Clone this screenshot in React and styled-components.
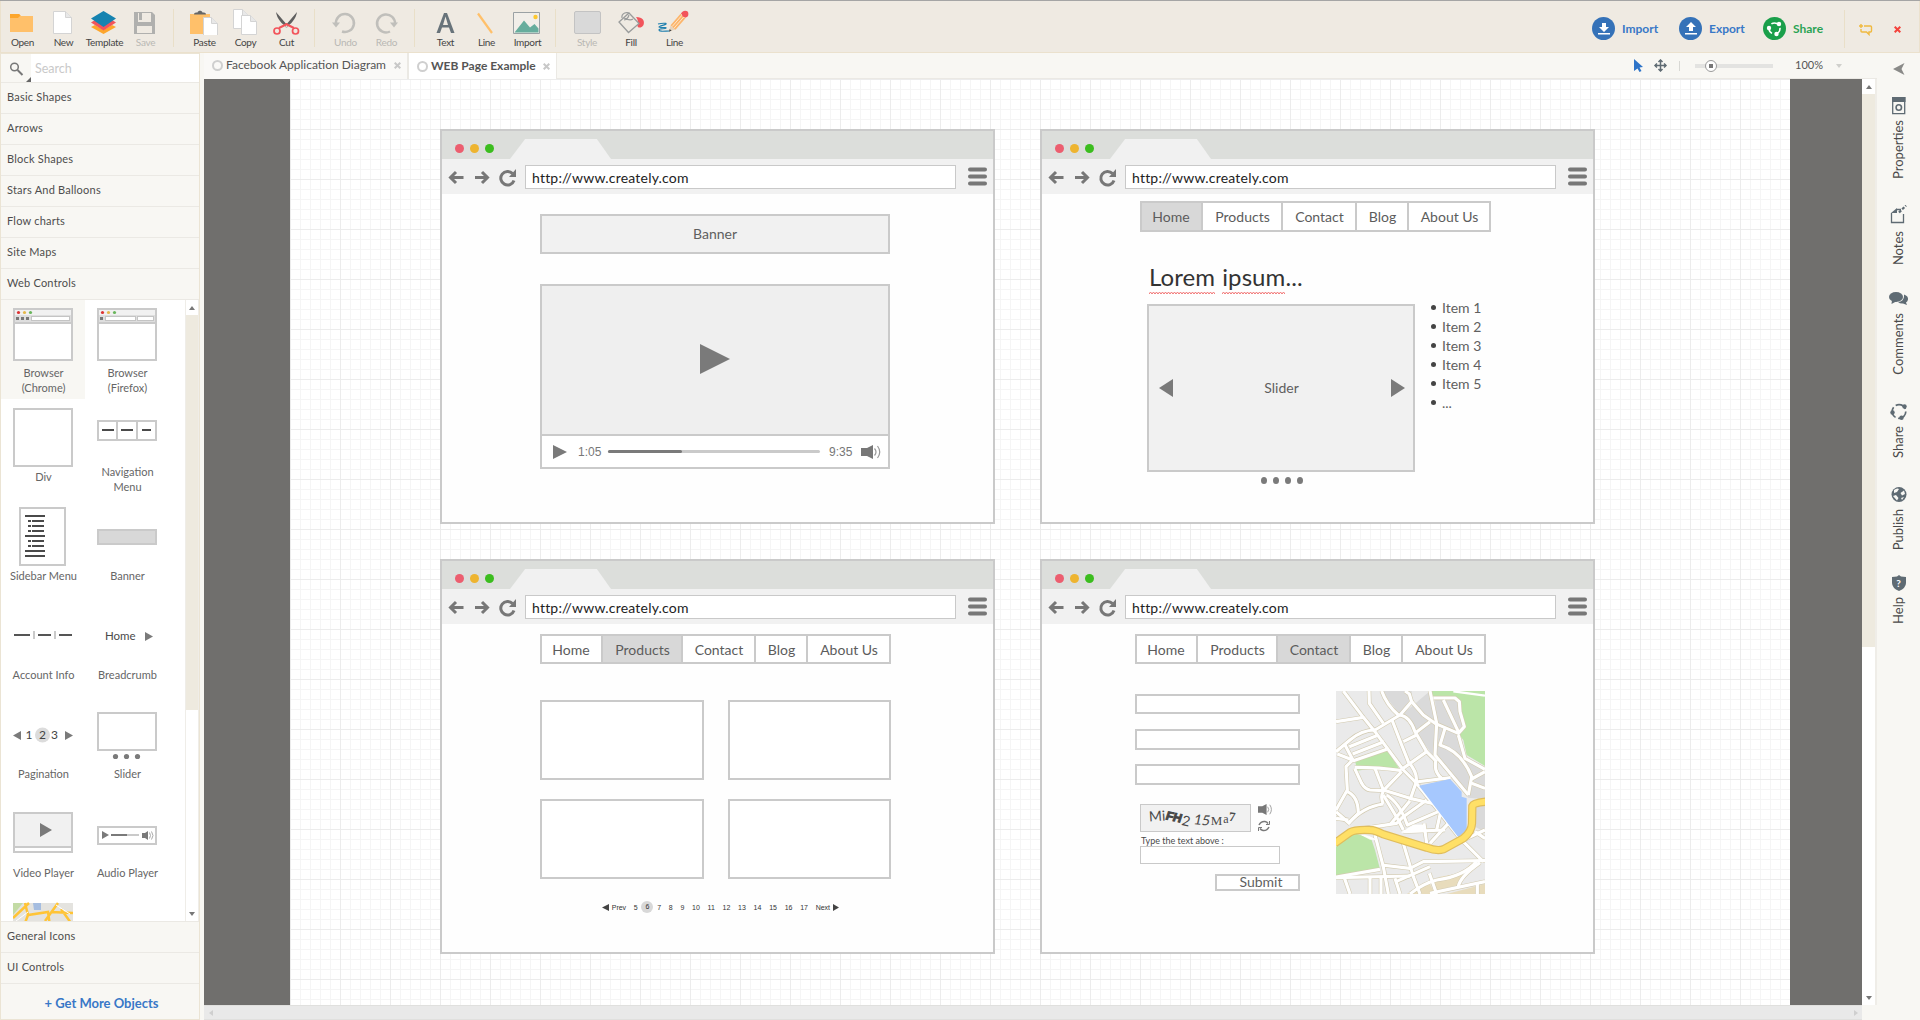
import React from "react";
import styled, { createGlobalStyle, css } from "styled-components";

const Global = createGlobalStyle`
  * { box-sizing: border-box; }
  body { margin: 0; overflow: hidden; font-family: Lato, "Liberation Sans", sans-serif; color: #555; background: #f8f7f3; }
  svg { display: block; flex: none; }
`;

/* ---------- shell ---------- */
const Shell = styled.div`
  width: 1920px; height: 1020px; display: flex; flex-direction: column;
  border-top: 1px solid #a5a5a5; background: #f8f7f3;
`;
const Toolbar = styled.header`
  height: 52px; flex: none; display: flex; align-items: flex-start;
  background: #efeae2; border: 1px solid #ebe1cd; border-width: 0 1px 1px;
  padding: 8px 0 0 1px;
`;
const Tool = styled.div`
  width: ${p => p.w || 41}px; display: flex; flex-direction: column; align-items: center;
  font-size: 10px; line-height: 14px; letter-spacing: -0.3px; white-space: nowrap;
  color: ${p => (p.off ? "#b9b8b4" : "#444")};
`;
const ToolSep = styled.div`
  width: 1px; height: 38px; background: #e9dfc8; margin: 0 10px 0 7px;
`;
const ToolbarRule = styled.div`width: 1px; height: 38px; background: #e9dfc8; margin: 1px 10px 0 7px;`;
const Spacer = styled.div`flex: 1;`;
const Action = styled.div`
  display: flex; align-items: center; gap: 7px; height: 23px; margin-top: 8px; width: ${p => p.w}px;
  font-size: 12px; font-weight: 700; color: ${p => p.c};
`;
const ToolbarEnd = styled.div`display: flex; margin-top: 9px; height: 23px; align-items: center; margin-left: 4px; width: 60px; gap: 21px;`;

const Main = styled.div`flex: 1; min-height: 0; display: flex;`;

/* ---------- shape library ---------- */
const Sidebar = styled.aside`
  width: 200px; margin-right: 4px; display: flex; flex-direction: column;
  border: 1px solid #ebe4d4; background: #f8f7f3;
`;
const SearchBar = styled.div`
  height: 29px; flex: none; display: flex; border-bottom: 1px solid #ebe9e4; background: #fff;
`;
const SearchIcon = styled.div`width: 30px; background: #f8f7f3;`;
const SearchText = styled.div`padding: 0 4px; font-size: 12.5px; line-height: 30px; color: #c9c9c9;`;
const Category = styled.div`
  height: 31px; flex: none; padding-left: 6px; font-size: 11px; letter-spacing: 0.22px; line-height: 28px;
  color: #4d4d4d; border-bottom: 1px solid #ebe9e4;
`;
const Library = styled.div`height: 622px; flex: none; display: flex; background: #fff; overflow: hidden; border-bottom: 1px solid #ebe9e4;`;
const ShapeGrid = styled.div`
  width: 184px; display: grid; grid-template-columns: 84px 84px; grid-auto-rows: 99px; align-content: start;
`;
const Shape = styled.div`
  display: flex; flex-direction: column; align-items: center; padding-top: 8px; text-align: center;
  font-size: 11px; line-height: 15px; color: #666; background: ${p => (p.on ? "#f8f7f3" : "transparent")};
`;
const ShapeLabel = styled.div`margin-top: ${p => (p.two ? -3 : 2)}px; padding-left: 1px; width: 72px; white-space: ${p => (p.two ? "normal" : "nowrap")};`;
const ShapeScroll = styled.div`
  width: 14px; display: flex; flex-direction: column; border: solid #efede8; border-width: 0 1px; background: #fff;
`;
const Thumb = styled.div`height: ${p => p.h}px; background: #eeeadf;`;
const ScrollBtn = styled.div`height: 15px; display: flex; align-items: center; justify-content: center;`;
const GetMore = styled.div`
  flex: 1; display: flex; align-items: center; justify-content: center; padding: 2px 0 0 3px;
  font-size: 13px; font-weight: 700; color: #3878c7;
`;

/* ---------- editor ---------- */
const Editor = styled.main`width: 1673px; display: flex; flex-direction: column;`;
const TabBar = styled.div`
  height: 26px; flex: none; display: flex; border-bottom: 1px solid #ebe9e4; background: #f8f7f3;
`;
const Tab = styled.div`
  width: ${p => p.w}px; height: 26px; display: flex; align-items: center; padding: ${p => p.pad};
  font-size: 12px; white-space: nowrap; color: #555; background: #faf9f7; border-right: 2px solid #ebe9e4;
  ${p => p.on && css`background: #fff; font-weight: 700; border-right-width: 1px;`}
`;
const TabDot = styled.span`
  width: 11px; height: 11px; border: 2px solid #cfcfcf; border-radius: 50%; margin-right: 3px; flex: none;
`;
const TabTitle = styled.span`width: ${p => p.w}px; padding-bottom: 1px;`;
const ZoomTools = styled.div`display: flex; align-items: center; margin-left: auto; width: 243px;`;
const ZoomSep = styled.div`width: 1px; height: 10px; background: #d8d8d4; margin: 0 15px 0 2px;`;
const ZoomTrack = styled.div`width: 78px; height: 4px; background: #e3e3e1; display: flex; align-items: center; padding-left: 10px;`;
const ZoomKnob = styled.div`
  width: 12px; height: 12px; flex: none; border-radius: 50%; border: 1px solid #9a9a9a; background: #fff;
  display: flex; align-items: center; justify-content: center;
  &::after { content: ""; width: 4px; height: 4px; background: #777; }
`;
const ZoomValue = styled.div`font-size: 11px; margin: 0 13px 0 22px; color: #555; padding-bottom: 2px;`;

const Work = styled.div`flex: 1; display: flex; min-height: 0;`;
const Desk = styled.div`width: 1658px; background: #706f6d; padding: 0 72px 0 86px; overflow: hidden;`;
const Paper = styled.div`
  position: relative; height: 100%; background-color: #fff;
  background-image:
    linear-gradient(to right, #ececec 1px, transparent 1px), linear-gradient(to bottom, #ececec 1px, transparent 1px),
    linear-gradient(to right, #f5f5f5 1px, transparent 1px), linear-gradient(to bottom, #f5f5f5 1px, transparent 1px);
  background-size: 50px 50px, 50px 50px, 10px 10px, 10px 10px;
`;
const VScroll = styled.div`width: 15px; display: flex; flex-direction: column; background: #fff; border-right: 2px solid #efede8;`;
const HScroll = styled.div`
  height: 15px; flex: none; background: #e9e9e9; border: 1px solid #e0e0de; border-width: 1px 0; width: 1658px;
  display: flex; align-items: center; justify-content: space-between; padding: 0 4px 0 5px;
`;

/* ---------- right dock ---------- */
const Dock = styled.aside`flex: 1; display: flex; flex-direction: column; align-items: center; padding-top: 10px;`;
const DockToggle = styled.div`height: 34px; width: 43px; padding-left: 16px;`;
const DockItem = styled.div`height: ${p => p.h}px; width: 43px; display: flex; flex-direction: column;`;
const DockIcon = styled.div`height: ${p => p.h}px; display: flex; justify-content: center;`;
const DockLabel = styled.div`
  writing-mode: vertical-rl; transform: rotate(180deg); font-size: 13px; line-height: 43px; width: 43px; color: #4a4a4a; white-space: nowrap;
  padding-left: 1px;
`;

/* ---------- wireframe browser window ---------- */
const Win = styled.section`
  position: absolute; left: ${p => p.x}px; top: ${p => p.y}px; width: 555px; height: 395px;
  border: 2px solid #cacaca; background: #fefefe; display: flex; flex-direction: column;
`;
const WinTop = styled.div`height: 28px; flex: none; background: #dcdedb; display: flex; align-items: flex-end;`;
const Lights = styled.div`display: flex; gap: 6px; padding: 0 0 6px 13px; width: 68px;`;
const Light = styled.i`width: 9px; height: 9px; border-radius: 50%; background: ${p => p.c};`;
const WinTab = styled.div`width: 101px; height: 20px; background: #f1f1f1; clip-path: polygon(15% 0, 86% 0, 100% 100%, 0 100%);`;
const WinBar = styled.div`height: 35px; flex: none; background: #f1f1f1; display: flex; align-items: center;`;
const Url = styled.div`
  width: 431px; height: 24px; margin-right: 11px; border: 1px solid #c9c9c9; background: #fff; padding-left: 6px;
  font-size: 14px; letter-spacing: 0.2px; line-height: 23px; color: #222;
`;
const WinBody = styled.div`flex: 1; padding-left: ${p => p.l}px; padding-top: ${p => p.t}px; font-size: 14px; color: #5f5f5f;`;

const Banner = styled.div`
  width: 350px; height: 40px; border: 2px solid #cacaca; background: #f1f1f1;
  display: flex; align-items: center; justify-content: center; padding-bottom: 1px;
`;
const Video = styled.div`width: 350px; height: 185px; margin-top: 30px; border: 2px solid #cacaca; background: #fff;`;
const Screen = styled.div`height: 150px; background: #efefef; border-bottom: 2px solid #cacaca; display: flex; align-items: center; justify-content: center; padding-bottom: 2px;`;
const Controls = styled.div`
  height: 31px; display: flex; align-items: center; padding-left: 11px; color: #777;
  font: 12px "Liberation Sans", sans-serif;
`;
const Time = styled.span`width: 24px; margin-left: ${p => p.l || 0}px;`;
const Volume = styled.span`margin-left: 8px;`;
const Progress = styled.div`width: 212px; height: 3px; margin: 0 9px 0 6px; border-radius: 2px; background: #cacaca;`;
const Played = styled.div`width: 35%; height: 3px; border-radius: 2px; background: #7a7a7a;`;

const Nav = styled.nav`width: 351px; height: ${p => p.h}px; border: 2px solid #cacaca; background: #fff; display: flex;`;
const NavItem = styled.div`
  width: ${p => p.w}px; display: flex; align-items: center; justify-content: center; border-right: 2px solid #cacaca;
  padding-left: ${p => p.nudge}px; color: #5c5c5c; background: ${p => (p.on ? "#d8d8d8" : "#fff")};
  &:first-child { padding: 0 1px 0 0; }
  &:last-child { border-right: 0; }
`;
const Heading = styled.div`font-size: 24px; letter-spacing: 0.1px; line-height: 30px; color: #333; margin: 30px 0 0 9px; height: 42px; display: flex; gap: 7px;`;
const Misspelt = styled.span`position: relative;`;
const Wave = styled.svg`position: absolute; left: 0; top: 29px; width: 100%; height: 4px;`;
const Row = styled.div`display: flex;`;
const SliderBox = styled.div`
  width: 268px; height: 168px; margin-left: 7px; border: 2px solid #cacaca; background: #f1f1f1;
  display: flex; align-items: center; justify-content: space-between; padding: 0 8px 0 10px;
`;
const SliderName = styled.span`padding: 0 1px 2px 0;`;
const SliderDots = styled.div`display: flex; gap: 6px; margin: 5px 0 0 121px;`;
const Dot = styled.i`width: 6px; height: 7px; border-radius: 50%; background: #7a7a7a;`;
const Items = styled.ul`margin: -6px 0 0 16px; padding: 0; list-style: none;`;
const Item = styled.li`
  height: 19px; line-height: 19px; display: flex; align-items: center; gap: 5px; color: #606060;
  &::before { content: ""; width: 5px; height: 5px; margin-right: 1px; border-radius: 50%; background: #444; }
`;
const Cards = styled.div`display: grid; grid-template-columns: 164px 163px; gap: 19px 24px; margin-top: 36px;`;
const Card = styled.div`height: 80px; border: 2px solid #cacaca; background: #fff;`;
const Pager = styled.div`
  display: flex; align-items: center; justify-content: space-between; width: 237px; height: 12px; margin: 22px 0 0 62px;
  font: 7px "Liberation Sans", sans-serif; color: #333;
`;
const PageNo = styled.span`
  &:nth-child(2) { margin-left: -5px; }
  &:nth-last-child(2) { margin-right: -5px; }
  ${p => p.on && css`width: 12px; height: 12px; line-height: 12px; text-align: center; border-radius: 50%; background: #d8d8d8; margin: 0 -4px;`}
`;
const ContactRow = styled.div`display: flex; justify-content: space-between; width: 350px; margin-top: 27px;`;
const Form = styled.div`width: 165px; padding-top: 3px;`;
const Field = styled.div`height: ${p => p.h || 21}px; border: 2px solid #cacaca; background: #fff; margin-bottom: ${p => p.gap || 14}px;`;
const Captcha = styled.div`
  width: 111px; height: 28px; border: 1px solid #c9c9c9; background: #f1f1f1; display: flex; align-items: center; padding-left: 8px; color: #4a4a4a;
  line-height: 16px;
`;
const Glyph = styled.span`
  font-family: ${p => p.f || "Lato"}, sans-serif; font-weight: ${p => p.b || 400}; font-size: ${p => p.s || 14}px;
  margin-left: ${p => p.l || 0}px; letter-spacing: ${p => p.ls || 0}px; -webkit-text-stroke: ${p => p.fat || 0}px #444;
  transform: translateY(${p => p.y || 0}px) rotate(${p => p.r || 0}deg) skewX(${p => p.k || 0}deg);
`;
const CaptchaRow = styled.div`display: flex; gap: 7px; margin: 19px 0 0 5px;`;
const CaptchaTools = styled.div`display: flex; flex-direction: column; gap: 5px;`;
const Hint = styled.div`font-size: 9px; line-height: 17px; height: 14px; margin-left: 6px; color: #4a4a4a;`;
const Answer = styled.div`width: 140px; height: 18px; margin-left: 5px; border: 1px solid #c9c9c9; background: #fff;`;
const Submit = styled.div`
  width: 85px; height: 17px; margin: 10px 0 0 80px; border: 2px solid #cacaca; background: #fff;
  text-align: center; padding-left: 7px; line-height: 12px;
`;

/* ---------- icons ---------- */
const Tri = ({ w, h, dir = "right", c = "#7a7a7a" }) => {
  const pts = { right: `0,0 ${w},${h / 2} 0,${h}`, left: `${w},0 0,${h / 2} ${w},${h}`, up: `0,${h} ${w / 2},0 ${w},${h}`, down: `0,0 ${w},0 ${w / 2},${h}` };
  return <svg width={w} height={h}><polygon points={pts[dir]} fill={c} /></svg>;
};
const Speaker = ({ w = 21, h = 14 }) => (
  <svg width={w} height={h} viewBox="0 0 21 14" preserveAspectRatio="none" fill="none" stroke="#999">
    <path d="M0 3h6l6-3v14l-6-3H0z" fill="#777" stroke="none" />
    <path d="M13.500 3.500q3 3.500 0 7M16.500 1q4.500 6 0 12" strokeWidth="1.200" />
  </svg>
);
const Cross = ({ s = 7, c = "#c8c8c8", w = 2 }) => (
  <svg width={s} height={s} viewBox="0 0 7 7"><path d="M.7.7l5.600 5.600M6.300.7L.7 6.300" stroke={c} strokeWidth={w} /></svg>
);
const Page = ({ x, y, w, h }) => (
  <g fill="#fff" stroke="#d4d4d4">
    <path d={`M${x} ${y}h${w - 6}l6 6v${h - 6}h-${w}z`} />
    <path d={`M${x + w - 6} ${y}v6h6`} fill="#e8e8e8" />
  </g>
);
const Icon = ({ x, w = 41, children }) => <svg width={w} height="26" viewBox={`${x} 9 ${w} 26`} fill="none">{children}</svg>;

const toolGroups = [
  { x: 2, tools: [
    { label: "Open", art: <><path d="M10 14h9l2 2h12v16H10z" fill="#ffc06a" /><path d="M10 14h9l1.500 1.500L18 18h-8z" fill="#fda62c" /></> },
    { label: "New", art: <Page x={53.5} y={11.5} w={18} h={22} /> },
    { label: "Template", art: <><path d="M91 27l12.500 7 12.500-7-4-2-8.500 5-8.500-5z" fill="#fda62c" /><path d="M91 22.500l12.500 8 12.500-8-4-2.500-8.500 5-8.500-5z" fill="#f2545b" /><path d="M91 18.500L103.500 11 116 18.500 103.500 27z" fill="#1683b0" /></> },
    { label: "Save", off: true, art: <><path d="M134 12h18l3 3v19h-21z" fill="#b0b0ae" /><path d="M138 13h13v9h-13z" fill="#efeae2" /><path d="M137 26h15v7h-15z" fill="#efeae2" /><path d="M139 13h3v7h-3z" fill="#b0b0ae" /></> },
  ] },
  { x: 184, tools: [
    { label: "Paste", art: <><path d="M190 14h20v20h-20z" fill="#ffc06a" /><path d="M194 14.500c0-2 2-2 3.500-2 .5-2.500 4.500-2.500 5 0 1.500 0 3.500 0 3.500 2z" fill="#666" /><Page x={203.5} y={17.5} w={14} h={18} /></> },
    { label: "Copy", art: <><Page x={233.5} y={9.5} w={15} h={19} /><Page x={241.5} y={15.5} w={15} h={19} /></> },
    { label: "Cut", art: <><path d="M276 12l12 14-1 1.500C282 24 277 19 276 12zM297 12L285 26l1 1.500c5-3.500 10-8.500 11-15.500z" fill="#5f5f5f" /><path d="M287 24l-8 4M286 24l8 4" stroke="#f2545b" strokeWidth="2" /><circle cx="277" cy="31" r="3" stroke="#f2545b" strokeWidth="1.700" /><circle cx="295.500" cy="31" r="3" stroke="#f2545b" strokeWidth="1.700" /></> },
  ] },
  { x: 325, tools: [
    { label: "Undo", off: true, art: <><path d="M336 24a9 9 0 1 1 6 7.500" stroke="#c0bfbb" strokeWidth="2.500" /><path d="M332 22.500h8l-4 5z" fill="#c0bfbb" /></> },
    { label: "Redo", off: true, art: <><path d="M395 24a9 9 0 1 0-5 7.500" stroke="#c0bfbb" strokeWidth="2.500" /><path d="M390 22.500h8l-4 5z" fill="#c0bfbb" /></> },
  ] },
  { x: 425, tools: [
    { label: "Text", art: <path d="M436.500 33h3.500l2-5.500h7l2 5.500h3.500L447 13h-3zM443 25l2.500-8.500L448 25z" fill="#68737a" /> },
    { label: "Line", art: <path d="M478 13.500L492 33" stroke="#ffc06a" strokeWidth="2.200" /> },
    { label: "Import", art: <><path d="M513.500 12.500h26v21h-26z" stroke="#9aa1a4" fill="#f1eee9" /><path d="M514.500 32.500l9.500-12 6 7 4.500-3.500 4 4.500v4z" fill="#67ad9d" /><circle cx="535.500" cy="17" r="2.200" fill="#fdc82f" /></> },
  ] },
  { x: 566, tools: [
    { label: "Style", off: true, w: 42, art: <rect x="574.500" y="11.500" width="26" height="22" rx="1.500" fill="#d9d9d9" stroke="#c3c3c3" /> },
    { label: "Fill", w: 46, art: <><path d="M636 17c7 0 9 4 7.500 8-2.500 4-7 3-6-.5.500-2 1-4-1.500-7.500z" fill="#f2545b" /><path d="M629 13l10 10.500-10.500 9L619 22z" stroke="#9a9c9c" fill="#efeae2" strokeWidth="1.300" /><path d="M622 18c-1-5 6-7 7-4M624 20q4-1 5-5M624 18q6 3 9 1" stroke="#9a9c9c" strokeWidth="1.200" /></> },
    { label: "Line", art: <><path d="M658 24c4-1 9-1 8 0s-7 2-7 3 8 0 7 1-7 0-7 2 6 1 11 1" stroke="#1f7fae" strokeWidth="1.200" /><path d="M669 31.500l1.500-6 5 4z" fill="#e5d3bd" /><path d="M669 31.500l.7-2.500 2 1.700z" fill="#444" /><path d="M673 27.500L683 16" stroke="#fcb56b" strokeWidth="6.500" /><path d="M672.200 26.500l9.800-11.300M674 28.200l9.800-11.300" stroke="#fff3e2" strokeWidth=".8" /><path d="M683.300 15.700l1.500-1.700" stroke="#f2545b" strokeWidth="6.500" /><circle cx="685.200" cy="14" r="3.200" fill="#f2545b" /></> },
  ] },
];

const TopToolbar = () => (
  <Toolbar>
    {toolGroups.map((g, gi) => {
      let x = g.x;
      return (
        <React.Fragment key={g.x}>
          {gi > 0 && <ToolSep />}
          {g.tools.map(({ label, off, art, w = 41 }) => {
            const at = x;
            x += w;
            return <Tool key={label} off={off} w={w}><Icon x={at} w={w}>{art}</Icon>{label}</Tool>;
          })}
        </React.Fragment>
      );
    })}
    <Spacer />
    <Action c="#3878c7" w={87}><svg width="23" height="23"><circle cx="11.500" cy="11.500" r="11.500" fill="#3572b8" /><path d="M10 6h4v4h3l-5 5-5-5h3zM6 16h12v1.500H6z" fill="#fff" /></svg>Import</Action>
    <Action c="#3878c7" w={84}><svg width="23" height="23"><circle cx="11.500" cy="11.500" r="11.500" fill="#3572b8" /><path d="M10 14h4v-4h3l-5-5-5 5h3zM6 16h12v1.500H6z" fill="#fff" /></svg>Export</Action>
    <Action c="#2aa354" w={74}><svg width="23" height="23" fill="none"><circle cx="11.500" cy="11.500" r="11.500" fill="#1a9f4a" /><circle cx="11.500" cy="11.500" r="5.500" stroke="#fff" strokeWidth="1.600" strokeDasharray="8 3" /><g fill="#fff"><circle cx="16" cy="7" r="2.200" /><circle cx="6" cy="11" r="2.200" /><circle cx="13.500" cy="17" r="2.200" /></g></svg>Share</Action>
    <ToolbarRule />
    <ToolbarEnd>
      <svg width="14" height="12" fill="none" stroke="#f0b93f" strokeWidth="1.400"><path d="M5 2h6.500q1 0 1 1v4q0 1-1 1H10v2.500L7.500 8H3Q2 8 2 7V5" /><path d="M0 2h4M2 0v4" /></svg>
      <Cross s={7} c="#f4433c" w={2} />
    </ToolbarEnd>
  </Toolbar>
);

const frame = { fill: "#fff", stroke: "#cacaca", strokeWidth: 2 };
const Art = ({ dy = 0, children }) => <svg width="60" height="60" fill="none"><g transform={`translate(0 ${dy})`}>{children}</g></svg>;
const BrowserThumb = ({ children }) => (
  <Art><rect x="1" y="1" width="58" height="51" {...frame} /><path d="M2 2h56v5H2z" fill="#f1f1f1" /><path d="M2 7h56v7H2z" fill="#dedede" /><path d="M2 15h56" stroke="#cacaca" strokeWidth="2" />
    <circle cx="5.500" cy="4.500" r="1.600" fill="#d33" /><circle cx="11.500" cy="4.500" r="1.600" fill="#e5b84a" /><circle cx="17.500" cy="4.500" r="1.600" fill="#69b55c" />{children}</Art>
);
const menuRows = "FIIIFIIFF".split("");
const shapes = [
  ["Browser (Chrome)", <BrowserThumb><path d="M3 9h3v3H3zM8 9h3v3H8zM13 9h3v3h-3z" fill="#777" /><rect x="18.500" y="8.500" width="38" height="4" fill="#fff" stroke="#c4c4c4" /></BrowserThumb>, 1],
  ["Browser (Firefox)", <BrowserThumb><path d="M3 9h3v3H3z" fill="#777" /><rect x="8.500" y="8.500" width="30" height="4" fill="#fff" stroke="#c4c4c4" /><rect x="40.500" y="8.500" width="16" height="4" fill="#fff" stroke="#c4c4c4" /></BrowserThumb>, 1],
  ["Div", <Art><rect x="1" y="2" width="58" height="57" {...frame} /></Art>],
  ["Navigation Menu", <Art><rect x="1" y="14" width="58" height="19" {...frame} /><path d="M20 14v19M40 14v19" stroke="#cacaca" strokeWidth="2" /><path d="M5 23h12M24 23h12M45 23h9" stroke="#4a4a4a" strokeWidth="2" /></Art>, 1],
  ["Sidebar Menu", <Art><rect x="7" y="2" width="45" height="57" {...frame} />{menuRows.map((k, i) => <path key={i} d={k === "F" ? `M12 ${10 + i * 5}h20` : `M15 ${10 + i * 5}h3m1 0h12`} stroke="#4a4a4a" strokeWidth="2" />)}</Art>],
  ["Banner", <Art><rect x="1" y="24" width="58" height="14" fill="#d8d8d8" stroke="#cacaca" strokeWidth="2" /></Art>],
  ["Account Info", <Art dy={-1}><path d="M1 31h16M25 31h13M46 31h13" stroke="#555" strokeWidth="2" /><path d="M21 27v8M42 27v8" stroke="#cacaca" strokeWidth="2" /></Art>],
  ["Breadcrumb", <Art dy={-1}><text x="8" y="36" fontSize="11.500" fill="#4a4a4a" fontFamily="Lato">Home</text><path d="M48 28v9l8-4.500z" fill="#7a7a7a" /></Art>],
  ["Pagination", <Art dy={-1}><circle cx="29.500" cy="32" r="7.500" fill="#dcdcdc" /><path d="M8 28v9l-8-4.500zM52 28v9l8-4.500z" fill="#7a7a7a" /><text y="36" fontSize="12" fill="#444" fontFamily="Lato"><tspan x="12.500">1</tspan><tspan x="26">2</tspan><tspan x="38">3</tspan></text></Art>],
  ["Slider", <Art dy={-1}><rect x="1" y="10" width="58" height="37" {...frame} /><g fill="#7a7a7a"><circle cx="18.500" cy="53.500" r="2.600" /><circle cx="29.500" cy="53.500" r="2.600" /><circle cx="40.500" cy="53.500" r="2.600" /></g></Art>],
  ["Video Player", <Art dy={-1}><rect x="1" y="11" width="58" height="39" {...frame} /><path d="M2 12h56v32H2z" fill="#f1f1f1" /><path d="M2 45h56" stroke="#cacaca" strokeWidth="2" /><path d="M27 21v14l12-7z" fill="#7a7a7a" /></Art>],
  ["Audio Player", <Art dy={-1}><rect x="1" y="25" width="58" height="17" {...frame} /><path d="M5 29v8l7-4zM45 31h3l3-2v9l-3-2h-3z" fill="#7a7a7a" /><path d="M14 33h16" stroke="#7a7a7a" strokeWidth="2" /><path d="M30 33h12" stroke="#cacaca" strokeWidth="2" /><path d="M52.500 30.500q2 3 0 6M54.500 29.500q3 4 0 8" stroke="#aaa" /></Art>],
  ["", <Art dy={-1}><path d="M0 2h60v58H0z" fill="#e4e3df" /><path d="M0 2h10L0 14z" fill="#c3dba5" /><path d="M20 2h8v7h-7z" fill="#a5bde0" /><path d="M0 17L16 2M12 2l3 12 20-3 2 14M15 14l-3 8M45 2L32 20M38 11l22 1M48 8l10 14" stroke="#ffc436" strokeWidth="2.500" /><path d="M43 4l14 9M3 20l12-9" stroke="#fff" /></Art>],
];

const categories = ["Basic Shapes", "Arrows", "Block Shapes", "Stars And Balloons", "Flow charts", "Site Maps", "Web Controls"];
const ShapePanel = () => (
  <Sidebar>
    <SearchBar>
      <SearchIcon><svg width="30" height="28" fill="none"><circle cx="13.500" cy="13" r="3.800" stroke="#777" strokeWidth="1.500" /><path d="M16.500 16l5 5" stroke="#777" strokeWidth="2" /><path d="M30 23v5h-5z" fill="#666" /></svg></SearchIcon>
      <SearchText>Search</SearchText>
    </SearchBar>
    {categories.map(c => <Category key={c}>{c}</Category>)}
    <Library>
      <ShapeGrid>
        {shapes.map(([label, icon, two], i) => <Shape key={i} on={i === 0}>{icon}<ShapeLabel two={two}>{label}</ShapeLabel></Shape>)}
      </ShapeGrid>
      <ShapeScroll>
        <ScrollBtn><Tri w={6} h={4} dir="up" c="#777" /></ScrollBtn>
        <Thumb h={395} />
        <Spacer />
        <ScrollBtn><Tri w={6} h={4} dir="down" c="#777" /></ScrollBtn>
      </ShapeScroll>
    </Library>
    <Category>General Icons</Category>
    <Category>UI Controls</Category>
    <GetMore>+ Get More Objects</GetMore>
  </Sidebar>
);

/* ---------- wireframes ---------- */
const BrowserWindow = ({ x, y, l, t, children }) => (
  <Win x={x} y={y}>
    <WinTop>
      <Lights><Light c="#ec5e6f" /><Light c="#eeb42f" /><Light c="#3bbd1e" /></Lights>
      <WinTab />
    </WinTop>
    <WinBar>
      <svg width="83" height="35" fill="none" stroke="#777" strokeWidth="3">
        <path d="M21.500 18.500H9M14 13l-5.500 5.500L14 24M33 18.500h13M40 13l5.500 5.500L40 24" />
        <path d="M70.500 14.500a6.800 6.800 0 1 0 1.500 7" /><path d="M74 10v8h-7z" fill="#777" stroke="none" />
      </svg>
      <Url>http://www.creately.com</Url>
      <svg width="20" height="35" stroke="#777" strokeWidth="4" strokeLinecap="round"><path d="M3 10.500h15M3 17.500h15M3 24.500h15" /></svg>
    </WinBar>
    <WinBody l={l} t={t}>{children}</WinBody>
  </Win>
);
const pages = ["Home", "Products", "Contact", "Blog", "About Us"];
const SiteNav = ({ active, h = 30, widths = [61, 80, 73, 52, 81] }) => (
  <Nav h={h}>{pages.map((n, i) => <NavItem key={n} w={widths[i]} nudge={1} on={n === active}>{n}</NavItem>)}</Nav>
);
const wavePath = "M0 3" + "l1.500-2l1.500 2".repeat(30);
const Spelling = ({ children }) => <Misspelt>{children}<Wave><path d={wavePath} fill="none" stroke="#f27474" strokeWidth="1" /></Wave></Misspelt>;

const streets = [
  "M70 33L130 112 165 155 250 270 288 308 350 385 420 475 490 545", "M147 33L148 70 190 130", "M185 33Q200 75 235 105", "M48 125L130 112",
  "M165 150L240 105 275 65 268 42 255 33", "M275 65L310 105 345 130 415 160 433 140 420 95 418 65 405 54 340 54", "M330 33L350 130 345 225 445 345",
  "M240 105Q270 110 285 155L320 215 350 245", "M285 160L330 125", "M216 120L245 195 265 245Q295 280 288 308", "M250 185L290 165", "M245 268L320 215",
  "M288 306L392 293", "M48 215L90 180Q125 150 165 150", "M75 195L100 242 200 208", "M88 200L175 165", "M98 222L192 185", "M52 222L98 240 78 260 82 330 48 390",
  "M104 265L125 310Q135 328 150 330L190 332 245 275", "M104 262Q180 262 245 272", "M165 265L190 330", "M190 330L270 355 345 372", "M288 308L270 360",
  "M190 335Q180 350 190 372", "M190 345L235 420 250 450", "M82 335Q115 350 115 400L85 430", "M48 395L90 432", "M48 415L85 420", "M85 430Q130 380 190 372", "M130 445L230 430 250 410 320 360",
  "M270 362L212 432", "M200 345Q240 370 262 435L355 395", "M375 145L360 195Q425 215 455 290L445 345", "M415 165L435 235 495 268", "M455 297L495 275", "M455 310L495 325",
  "M348 240Q340 275 365 295", "M250 455L375 450", "M312 430L320 490", "M362 395L350 450", "M385 430L330 490", "M165 465L190 560 205 642", "M48 591L180 568", "M185 555L270 565 310 545 495 542",
  "M250 490L280 590 300 642", "M72 590L90 642", "M150 592V642", "M183 590V642", "M48 593L270 588", "M225 595L240 642", "M228 605L330 560", "M328 580L350 642", "M270 642Q310 610 350 600 430 590 470 545",
  "M495 605L330 640", "M480 548Q420 590 415 620", "M370 60L415 155", "M465 455L495 475", "M430 480L495 450", "M472 610V642",
];
const mainRoad = "M44 490L90 457Q105 448 150 450 165 450 190 463L320 503Q350 514 370 508L430 475Q455 455 456 430L457 378Q460 368 500 365";
const CityMap = () => (
  <svg width="149" height="203" viewBox="48 33 447 609" preserveAspectRatio="none" fill="none" strokeLinejoin="round">
    <path d="M48 33h447v609H48z" fill="#eaeaea" />
    <path d="M185 33h90v32l-35 40zM245 105l85-72 20 97 65 30 20 75 60 33v90l-50-5L345 235 290 160zM345 60h65l20 85-15 15-65-30zM465 378h30v78l-30-16z" fill="#dadada" />
    <path d="M330 33h165v225l-55-33-10-45-12-15 17-20-15-50V65L400 50l-65-2zM104 238l96-30 40 62q-70-10-128 2zM48 500l55-40 50 15 12 35 15 58-132 20z" fill="#bbe5a8" />
    <path d="M340 605l20-15 60-10 35-30h25l-60 50-5 15-70 17zM260 642l70-30 15 30zM380 642l115-30v30z" fill="#e8dcbc" />
    <g stroke="#d2cab0" strokeWidth="13">{streets.map(d => <path key={d} d={d} />)}</g>
    <g stroke="#fff" strokeWidth="9.500">{streets.map(d => <path key={d} d={d} />)}<path d="M400 34L495 47" strokeWidth="7" /><path d="M245 457l35-22h30v20zM125 465q20 0 45 15l-20-2z" fill="#fff" strokeWidth="2" /></g>
    <path d="M297 317l93-20 35 38v15l15 5v95l-25 22z" fill="#a6c8fe" />
    <path stroke="#e0bd5c" strokeWidth="25" d={mainRoad} />
    <path stroke="#ffe067" strokeWidth="18" d={mainRoad} />
  </svg>
);

const pagerItems = ["Prev", "5", "6", "7", "8", "9", "10", "11", "12", "13", "14", "15", "16", "17", "Next"];
const Diagram = () => (
  <Paper>
    <BrowserWindow x={150} y={50} l={98} t={20}>
      <Banner>Banner</Banner>
      <Video>
        <Screen><Tri w={30} h={30} /></Screen>
        <Controls><Tri w={14} h={14} /><Time l={11}>1:05</Time><Progress><Played /></Progress><Time>9:35</Time><Volume><Speaker /></Volume></Controls>
      </Video>
    </BrowserWindow>
    <BrowserWindow x={750} y={50} l={98} t={7}>
      <SiteNav active="Home" h={31} widths={[61, 80, 74, 52, 80]} />
      <Heading><Spelling>Lorem</Spelling><span><Spelling>ipsum</Spelling>...</span></Heading>
      <Row>
        <SliderBox><Tri w={14} h={18} dir="left" /><SliderName>Slider</SliderName><Tri w={14} h={18} /></SliderBox>
        <Items>{["Item 1", "Item 2", "Item 3", "Item 4", "Item 5", "..."].map(i => <Item key={i}>{i}</Item>)}</Items>
      </Row>
      <SliderDots><Dot /><Dot /><Dot /><Dot /></SliderDots>
    </BrowserWindow>
    <BrowserWindow x={150} y={480} l={98} t={10}>
      <SiteNav active="Products" />
      <Cards><Card /><Card /><Card /><Card /></Cards>
      <Pager>
        <Tri w={7} h={7} dir="left" c="#444" />
        {pagerItems.map(p => <PageNo key={p} on={p === "6"}>{p}</PageNo>)}
        <Tri w={6} h={7} c="#444" />
      </Pager>
    </BrowserWindow>
    <BrowserWindow x={750} y={480} l={93} t={10}>
      <SiteNav active="Contact" />
      <ContactRow>
        <Form>
          <Field h={20} gap={15} /><Field /><Field />
          <CaptchaRow>
            <Captcha>
              <Glyph y={-2} r={-4}>Mi</Glyph>
              <Glyph y={-1} r={12} k={-6} b={700} s={12} l={1} f="Liberation Sans" fat={0.9}>FH</Glyph>
              <Glyph y={3} r={14}>2</Glyph>
              <Glyph y={2} r={4} k={-8} l={4}>15</Glyph>
              <Glyph f="Liberation Serif" y={3} s={13}>M</Glyph>
              <Glyph f="Liberation Serif" y={1} s={12} l={1}>a</Glyph>
              <Glyph f="Liberation Serif" r={6} b={700} s={13} y={-1}>7</Glyph>
            </Captcha>
            <CaptchaTools>
              <Speaker w={15} h={11} />
              <svg width="12" height="12" fill="none" stroke="#7a7a7a" strokeWidth="1.500"><path d="M1 5Q3 1 7 1.500q2 .3 3 2M11 7Q9 11 5 10.500q-2-.3-3-2" /><path d="M11.500 1v3.500H8M.5 11V7.500H4" strokeWidth="1" /></svg>
            </CaptchaTools>
          </CaptchaRow>
          <Hint>Type the text above :</Hint>
          <Answer />
          <Submit>Submit</Submit>
        </Form>
        <CityMap />
      </ContactRow>
    </BrowserWindow>
  </Paper>
);

const slate = "#5f6b73";
const dock = [
  ["Properties", 108, 23, <svg width="14" height="18"><path d="M.7.7h12v16H.7z" fill="none" stroke={slate} strokeWidth="1.300" /><path d="M0 0h13.500v5H0z" fill={slate} /><circle cx="6.800" cy="10.500" r="2.700" fill="none" stroke={slate} strokeWidth="1.600" /></svg>],
  ["Notes", 87, 26, <svg width="17" height="19" fill="none" stroke={slate} strokeWidth="1.300"><path d="M1.500 8v9.500h12V9M7 4.500h4" /><path d="M1 8l6-5v5z" fill={slate} stroke="none" /><path d="M9 7.500l7-7" strokeWidth="2.200" strokeDasharray="3 1.500" /></svg>],
  ["Comments", 111, 21, <svg width="20" height="14" fill={slate}><ellipse cx="7" cy="5" rx="7" ry="5" /><path d="M3 8l-.5 4L8 9z" /><path d="M15 2.500q4.500 1.500 4 5-.3 2-2 3l1 2.500-4-1.500q-3 .3-5-1.500 6-.5 6-6z" /></svg>],
  ["Share", 84, 23, <svg width="18" height="17" fill="none"><circle cx="9" cy="8.500" r="6.800" stroke={slate} strokeWidth="1.700" strokeDasharray="11.500 2.700" /><g fill={slate}><circle cx="14.500" cy="3.500" r="2.200" /><circle cx="2.500" cy="9.500" r="2.200" /><circle cx="11.500" cy="14.700" r="2.200" /></g></svg>],
  ["Publish", 88, 22, <svg width="16" height="16"><circle cx="8" cy="7.500" r="7.500" fill={slate} /><path d="M3 3q3-2.500 5-1L6 5 3 6zM9.500 6l3.500-2.500 1 3.500-3 1.500zM2 9l3-1 2.500 3-1.500 2.500zM10 11l3-1-2 3z" fill="#f8f7f3" /></svg>],
  ["Help", 88, 22, <svg width="14" height="16"><path d="M7 0l2 1.500 5 .5v6q0 5-7 8-7-3-7-8V2l5-.5z" fill={slate} /><text x="4.200" y="12" fontSize="10" fontWeight="700" fill="#fff" fontFamily="Lato">?</text></svg>],
];

export default function App() {
  return (
    <Shell>
      <Global />
      <TopToolbar />
      <Main>
        <ShapePanel />
        <Editor>
          <TabBar>
            <Tab w={205} pad="0 0 2px 8px"><TabDot /><TabTitle w={168}>Facebook Application Diagram</TabTitle><Cross /></Tab>
            <Tab w={148} on pad="0 0 0 8px"><TabDot /><TabTitle w={112}>WEB Page Example</TabTitle><Cross /></Tab>
            <ZoomTools>
              <svg width="9" height="13"><path d="M0 0l9 8-3.500.5 2 3.500-2 1-2-3.500L0 12z" fill="#2e74c8" /></svg>
              <svg width="34" height="13" viewBox="-11 0 34 13" fill="none" stroke={slate} strokeWidth="1.500"><path d="M6.500 1v11M1 6.500h11" /><path d="M4.500 3l2-2 2 2M4.500 10l2 2 2-2M3 4.500l-2 2 2 2M10 4.500l2 2-2 2" /></svg>
              <ZoomSep />
              <ZoomTrack><ZoomKnob /></ZoomTrack>
              <ZoomValue>100%</ZoomValue>
              <Tri w={6} h={4} dir="down" c="#d0d0cc" />
            </ZoomTools>
          </TabBar>
          <Work>
            <Desk><Diagram /></Desk>
            <VScroll>
              <ScrollBtn><Tri w={6} h={4} dir="up" c="#777" /></ScrollBtn>
              <Thumb h={553} />
              <Spacer />
              <ScrollBtn><Tri w={6} h={4} dir="down" c="#777" /></ScrollBtn>
            </VScroll>
          </Work>
          <HScroll><Tri w={4} h={6} dir="left" c="#cfcfcf" /><Tri w={4} h={6} c="#cfcfcf" /></HScroll>
        </Editor>
        <Dock>
          <DockToggle><svg width="12" height="12"><path d="M11.500 0L0 6l11.500 6-3-6z" fill="#8a8a88" /></svg></DockToggle>
          {dock.map(([label, h, ih, icon]) => <DockItem key={label} h={h}><DockIcon h={ih}>{icon}</DockIcon><DockLabel>{label}</DockLabel></DockItem>)}
        </Dock>
      </Main>
    </Shell>
  );
}
